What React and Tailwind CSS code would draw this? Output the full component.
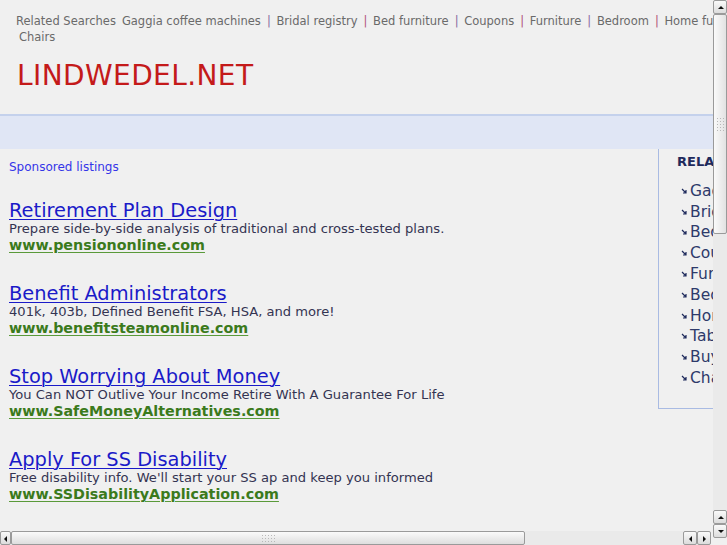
import React from 'react';

const related = [
  'Gaggia coffee machines',
  'Bridal registry',
  'Bed furniture',
  'Coupons',
  'Furniture',
  'Bedroom',
  'Home furniture',
  'Tables',
  'Buy furniture',
  'Chairs',
];

const ads = [
  {
    title: 'Retirement Plan Design',
    desc: 'Prepare side-by-side analysis of traditional and cross-tested plans.',
    url: 'www.pensiononline.com',
  },
  {
    title: 'Benefit Administrators',
    desc: '401k, 403b, Defined Benefit FSA, HSA, and more!',
    url: 'www.benefitsteamonline.com',
  },
  {
    title: 'Stop Worrying About Money',
    desc: 'You Can NOT Outlive Your Income Retire With A Guarantee For Life',
    url: 'www.SafeMoneyAlternatives.com',
  },
  {
    title: 'Apply For SS Disability',
    desc: "Free disability info. We'll start your SS ap and keep you informed",
    url: 'www.SSDisabilityApplication.com',
  },
];

function Arrow({ dir }) {
  const pts = {
    up: '2,6 8,6 5,3',
    down: '2,3 8,3 5,6',
    left: '6,2 6,8 3,5',
    right: '3,2 3,8 6,5',
  }[dir];
  return (
    <div className="w-[14px] h-[14px] border border-[#9a9a9a] rounded-[2px] bg-gradient-to-b from-[#fafafa] to-[#dcdcdc] flex items-center justify-center">
      <svg width="9" height="9" viewBox="0 0 9 9">
        <polygon points={pts} fill="#111" />
      </svg>
    </div>
  );
}

function Grip({ vertical }) {
  return (
    <div className={vertical ? 'grid grid-cols-3 gap-[2px]' : 'grid grid-cols-5 gap-[2px]'}>
      {Array(15).fill(0).map((_, i) => (
        <span key={i} className="w-[1px] h-[1px] bg-[#b8b8b8]" />
      ))}
    </div>
  );
}

function Bullet() {
  return (
    <svg width="7" height="7" viewBox="0 0 7 7" className="shrink-0">
      <path d="M1 1 L5 5 M2 5 H5 V2" stroke="#1e2a5c" strokeWidth="1.2" fill="none" />
    </svg>
  );
}

export default function App() {
  return (
    <div className="w-[727px] h-[545px] relative overflow-hidden bg-[#f0f0f0]" style={{ fontFamily: '"DejaVu Sans", Verdana, sans-serif' }}>
      {/* page viewport */}
      <div className="w-[713px] h-[531px] overflow-hidden">
        <div className="w-[932px]">
          {/* related searches bar */}
          <div className="pl-[16px] pt-[13px] text-[11.5px] leading-[16px] text-[#6a6a6a]">
            <span className="mr-[6px] whitespace-nowrap">Related Searches</span>
            {related.map((r, i) => (
              <React.Fragment key={r}>
                <span className={i === related.length - 1 ? 'whitespace-nowrap ml-[3px]' : 'whitespace-nowrap'}>{r}</span>
                {i < related.length - 1 && (
                  <span className={(i % 2 ? 'text-[#b0527a]' : 'text-[#8a6aa0]') + ' ml-[6px] mr-[2px]'}>|</span>
                )}{' '}
              </React.Fragment>
            ))}
          </div>

          {/* logo */}
          <div className="pl-[17px] pt-[15px] h-[69px] text-[28px] leading-[32px] tracking-[0.4px] text-[#c41a1a]">
            LINDWEDEL.NET
          </div>

          {/* blue band */}
          <div className="h-[35px] border-t-2 border-[#c4d1ec] bg-[#e0e6f5]" />

          <div className="flex">
            {/* listings */}
            <div className="w-[658px] pl-[9px] pt-[10px]">
              <div className="text-[12px] leading-[16px] text-[#3535e8]">Sponsored listings</div>
              <div className="pt-[26px] flex flex-col gap-[31px]">
                {ads.map((a) => (
                  <div key={a.url} className="flex flex-col">
                    <a className="text-[19.4px] leading-[19px] text-[#1a1ac8] underline decoration-1 underline-offset-[2px]">{a.title}</a>
                    <div className="text-[13.1px] leading-[17px] text-[#343452]">{a.desc}</div>
                    <a className="text-[14.3px] leading-[16px] font-bold text-[#3b7a1c] underline decoration-1 underline-offset-[2px] decoration-[#5a9a3a]">{a.url}</a>
                  </div>
                ))}
              </div>
            </div>

            {/* sidebar */}
            <div className="w-[230px] h-[260px] border-l border-b border-[#a9bbe3] pl-[18px] pt-[5px]">
              <div className="text-[13px] leading-[16px] font-bold text-[#1e2a5c]">RELATED SEARCHES</div>
              <ul className="mt-[11px] pl-[4px] flex flex-col">
                {related.map((r) => (
                  <li key={r} className="flex items-center gap-[2px] h-[20.8px] text-[15.5px] text-[#2e3a6a]">
                    <Bullet />
                    <span>{r}</span>
                  </li>
                ))}
              </ul>
            </div>
          </div>
        </div>
      </div>

      {/* vertical scrollbar */}
      <div className="absolute left-[713px] top-0 w-[14px] h-[538px] flex flex-col bg-[#ececec]">
        <Arrow dir="up" />
        <div className="h-[220px] border border-[#9a9a9a] rounded-[2px] bg-gradient-to-r from-[#fafafa] to-[#e2e2e2] flex items-center justify-center">
          <Grip vertical />
        </div>
        <div className="flex-1 bg-[#eaeaea]" />
        <Arrow dir="up" />
        <Arrow dir="down" />
      </div>

      {/* horizontal scrollbar */}
      <div className="absolute left-0 top-[531px] w-[711px] h-[14px] flex bg-[#ececec]">
        <div className="w-[11px] h-[14px] border border-[#9a9a9a] rounded-[2px] bg-gradient-to-b from-[#fafafa] to-[#dcdcdc] flex items-center justify-center">
          <svg width="7" height="9" viewBox="0 0 7 9"><polygon points="5,2 5,8 2,5" fill="#111" /></svg>
        </div>
        <div className="w-[514px] border border-[#9a9a9a] rounded-[2px] bg-gradient-to-b from-[#fafafa] to-[#dedede] flex items-center justify-center">
          <Grip />
        </div>
        <div className="flex-1 bg-[#eaeaea]" />
        <Arrow dir="left" />
        <Arrow dir="right" />
      </div>
    </div>
  );
}
